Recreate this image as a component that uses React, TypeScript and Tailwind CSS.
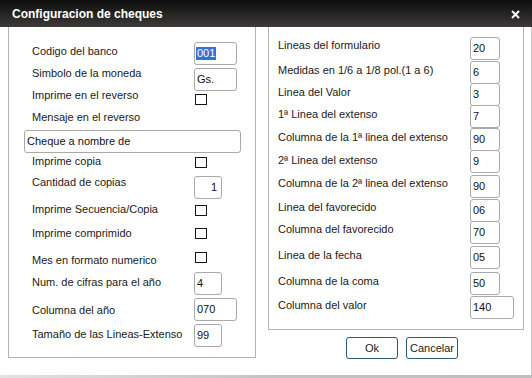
import React from "react";

const font = { fontFamily: '"Liberation Sans", Arial, sans-serif' };

const Box = ({ value, w = "w-[43px]", right = false, selected = false }: { value: string; w?: string; right?: boolean; selected?: boolean }) => (
  <div
    className={`${w} h-[23px] border border-[#a9a9a9] rounded-[3px] bg-white flex items-center text-[11px] text-[#111] ${right ? "justify-end pr-[3px]" : "pl-[1px]"}`}
  >
    {selected ? <span className="bg-[#3672d6] text-white leading-[13px] px-[1px]">{value}</span> : <span className="px-[1px]">{value}</span>}
  </div>
);

const Check = () => <div className="w-[12px] h-[11px] border-[1.5px] border-[#161616] bg-white ml-[1px]" />;

const Row = ({ h, lp, cp, lw, label, children }: { h: string; lp: string; cp: string; lw: string; label: string; children?: React.ReactNode }) => (
  <div className={`flex items-start ${h}`}>
    <span className={`${lw} ${lp} text-[11px] leading-[13px] text-[#1a1a1a] whitespace-nowrap`}>{label}</span>
    <div className={cp}>{children}</div>
  </div>
);

export default function App() {
  const L = "w-[162px]";
  const R = "w-[192px]";
  return (
    <div className="w-[532px] h-[378px] flex flex-col bg-white overflow-hidden" style={font}>
      <div className="h-[27px] shrink-0 bg-gradient-to-b from-[#0e0e0e] to-[#3c3b39] flex items-center justify-between pl-[12px] pr-[12px]">
        <span className="text-white font-bold text-[12px]">Configuracion de cheques</span>
        <svg width="9" height="9" viewBox="0 0 9 9" className="mt-[1px]">
          <path d="M1 1L8 8M8 1L1 8" stroke="white" strokeWidth="2" />
        </svg>
      </div>
      <div className="flex-1 flex border-r border-[#c9c9c9] pl-[8px]">
        <div className="w-[248px] h-[331px] border-x border-b border-[#b5b5b5] pt-[15px] pl-[23px]">
          <Row h="h-[25px]" lp="pt-[3px]" cp="" lw={L} label="Codigo del banco"><Box value="001" selected /></Row>
          <Row h="h-[22px]" lp="" cp="pt-[1px]" lw={L} label="Simbolo de la moneda"><Box value="Gs." /></Row>
          <Row h="h-[22px]" lp="" cp="pt-[5px]" lw={L} label="Imprime en el reverso"><Check /></Row>
          <Row h="h-[19px]" lp="" cp="" lw={L} label="Mensaje en el reverso" />
          <div className="h-[25px]">
            <div className="-ml-[8px] w-[217px] h-[23px] border border-[#a9a9a9] rounded-[3px] flex items-center pl-[2px] text-[11px] text-[#111]">Cheque a nombre de</div>
          </div>
          <Row h="h-[21px]" lp="" cp="pt-[2px]" lw={L} label="Imprime copia"><Check /></Row>
          <Row h="h-[27px]" lp="" cp="" lw={L} label="Cantidad de copias"><Box value="1" w="w-[28px]" right /></Row>
          <Row h="h-[24px]" lp="" cp="pt-[2px]" lw={L} label="Imprime Secuencia/Copia"><Check /></Row>
          <Row h="h-[25px]" lp="" cp="pt-[1px]" lw={L} label="Imprime comprimido"><Check /></Row>
          <Row h="h-[20px]" lp="pt-[2px]" cp="" lw={L} label="Mes en formato numerico"><Check /></Row>
          <Row h="h-[26px]" lp="pt-[4px]" cp="" lw={L} label="Num. de cifras para el año"><Box value="4" w="w-[28px]" /></Row>
          <Row h="h-[26px]" lp="pt-[6px]" cp="" lw={L} label="Columna del año"><Box value="070" /></Row>
          <Row h="h-[23px]" lp="pt-[4px]" cp="" lw={L} label="Tamaño de las Lineas-Extenso"><Box value="99" w="w-[28px]" /></Row>
        </div>
        <div className="ml-[12px] flex flex-col">
          <div className="w-[256px] h-[303px] border-x border-b border-[#b5b5b5] pt-[10px] pl-[9px]">
            <Row h="h-[24px]" lp="pt-[2px]" cp="" lw={R} label="Lineas del formulario"><Box value="20" w="w-[30px]" /></Row>
            <Row h="h-[22px]" lp="pt-[3px]" cp="" lw={R} label="Medidas en 1/6 a 1/8 pol.(1 a 6)"><Box value="6" w="w-[30px]" /></Row>
            <Row h="h-[22px]" lp="pt-[3px]" cp="" lw={R} label="Linea del Valor"><Box value="3" w="w-[30px]" /></Row>
            <Row h="h-[23px]" lp="pt-[3px]" cp="" lw={R} label="1ª Linea del extenso"><Box value="7" w="w-[30px]" /></Row>
            <Row h="h-[22px]" lp="pt-[3px]" cp="" lw={R} label="Columna de la 1ª linea del extenso"><Box value="90" w="w-[30px]" /></Row>
            <Row h="h-[25px]" lp="pt-[4px]" cp="" lw={R} label="2ª Linea del extenso"><Box value="9" w="w-[30px]" /></Row>
            <Row h="h-[24px]" lp="pt-[2px]" cp="" lw={R} label="Columna de la 2ª linea del extenso"><Box value="90" w="w-[30px]" /></Row>
            <Row h="h-[22px]" lp="pt-[2px]" cp="" lw={R} label="Linea del favorecido"><Box value="06" w="w-[30px]" /></Row>
            <Row h="h-[25px]" lp="pt-[2px]" cp="" lw={R} label="Columna del favorecido"><Box value="70" w="w-[30px]" /></Row>
            <Row h="h-[26px]" lp="pt-[3px]" cp="" lw={R} label="Linea de la fecha"><Box value="05" w="w-[30px]" /></Row>
            <Row h="h-[24px]" lp="pt-[3px]" cp="" lw={R} label="Columna de la coma"><Box value="50" w="w-[30px]" /></Row>
            <Row h="h-[23px]" lp="pt-[3px]" cp="" lw={R} label="Columna del valor"><Box value="140" w="w-[44px]" /></Row>
          </div>
          <div className="flex gap-[8px] mt-[7px] pl-[78px]">
            <button className="w-[52px] h-[22px] border border-[#2b5a7e] rounded-[3px] bg-white text-[11px] text-[#222]">Ok</button>
            <button className="w-[52px] h-[22px] border border-[#2b5a7e] rounded-[3px] bg-white text-[11px] text-[#222]">Cancelar</button>
          </div>
        </div>
      </div>
      <div className="h-[3px] shrink-0 bg-gradient-to-r from-[#e2e2e2] via-[#c4c4c4] to-[#bdbdbd]" />
    </div>
  );
}
